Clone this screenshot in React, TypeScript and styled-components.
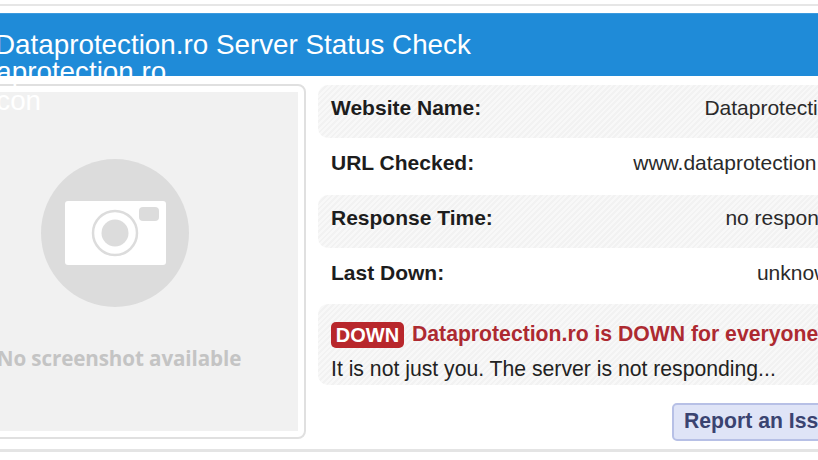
import React from "react";
import styled, { createGlobalStyle } from "styled-components";

const Global = createGlobalStyle`
  html, body { margin: 0; padding: 0; background: #fff; overflow: hidden; width: 818px; height: 460px; }
  body { font-family: "Liberation Sans", Arial, sans-serif; color: #222; }
`;

const Sheet = styled.div`
  width: 1000px;
  height: 448px;
  margin: 4px 0 0 -76px;
  box-sizing: border-box;
  border-top: 2px solid #e6e6e6;
  border-bottom: 3px solid #e4e4e4;
  padding-top: 7px;
  background: #fff;
`;

const Header = styled.header`
  position: relative;
  height: 63px;
  background: #1f8bd8;
  border-top: 1px solid #3c9ade;
  box-sizing: border-box;
  padding: 16px 0 0 71px;
`;

const Title = styled.h1`
  margin: 0;
  font-size: 27.8px;
  line-height: 30px;
  font-weight: 400;
  color: #fff;
`;

const AltText = styled.span`
  position: absolute;
  z-index: 2;
  left: 29px;
  top: 43px;
  width: 250px;
  font-size: 27.8px;
  line-height: 29px;
  color: #fff;
`;

const Body = styled.div`
  display: flex;
  align-items: flex-start;
  gap: 12px;
  padding-top: 8px;
`;

const ScreenshotCard = styled.div`
  flex: none;
  width: 382px;
  height: 355px;
  box-sizing: border-box;
  padding: 6px;
  border: 2px solid #e0e0e0;
  border-radius: 8px;
  background: #fff;
`;

const Placeholder = styled.div`
  height: 100%;
  background: #f1f1f1;
  display: flex;
  flex-direction: column;
  align-items: center;
  padding-top: 67px;
  box-sizing: border-box;
`;

const PlaceholderCaption = styled.div`
  margin: 38px 0 0 8px;
  font-family: "Open Sans", "Noto Sans", sans-serif;
  font-size: 20.6px;
  line-height: 26px;
  font-weight: 700;
  letter-spacing: -0.1px;
  color: #c4c4c4;
  white-space: nowrap;
`;

const Details = styled.div`
  flex: 1;
  display: flex;
  flex-direction: column;
  gap: 2px;
  padding-top: 1px;
  min-width: 0;
`;

const Row = styled.div<{ $striped?: boolean }>`
  height: 53px;
  box-sizing: border-box;
  padding: 0 0 8px 13px;
  width: 523px;
  display: flex;
  align-items: center;
  justify-content: space-between;
  border-radius: 10px;
  background: ${(p) =>
    p.$striped
      ? "repeating-linear-gradient(-45deg, #f2f2f2 0 2px, #f8f8f8 2px 4px)"
      : "transparent"};
`;

const Label = styled.span`
  font-weight: 700;
  font-size: 21px;
  color: #1d1d1d;
`;

const Value = styled.span`
  font-size: 21px;
  color: #2a2a2a;
  white-space: nowrap;
`;

const StatusBox = styled.div`
  margin-top: -1px;
  width: 700px;
  height: 81px;
  box-sizing: border-box;
  padding: 18px 0 0 13px;
  border-radius: 10px;
  background: repeating-linear-gradient(-45deg, #f2f2f2 0 2px, #f8f8f8 2px 4px);
`;

const StatusLine = styled.div`
  display: flex;
  align-items: center;
  gap: 8px;
  height: 26px;
`;

const Badge = styled.span`
  width: 73px;
  height: 26px;
  border-radius: 5px;
  background: #b8272c;
  color: #fff;
  font-weight: 700;
  font-size: 20px;
  line-height: 27px;
  text-align: center;
`;

const StatusHeading = styled.span`
  font-size: 21.2px;
  line-height: 24px;
  padding-bottom: 2px;
  font-weight: 700;
  color: #ad2a31;
  white-space: nowrap;
`;

const StatusText = styled.div`
  margin-top: 8px;
  font-size: 21.2px;
  line-height: 25px;
  color: #222;
`;

const Actions = styled.div`
  display: flex;
  padding: 16px 0 0 354px;
`;

const ReportButton = styled.button`
  height: 38px;
  width: 190px;
  padding: 0 0 2px 10px;
  text-align: left;
  border: 2px solid #b7c0e6;
  border-radius: 5px;
  background: #dfe4f7;
  color: #3a4371;
  font-family: inherit;
  font-size: 21.2px;
  font-weight: 700;
  white-space: nowrap;
`;

const CameraIcon = () => (
  <svg width="148" height="148" viewBox="0 0 148 148" aria-hidden="true">
    <circle cx="74" cy="74" r="74" fill="#dcdcdc" />
    <rect x="24" y="42" width="101" height="64" rx="3" fill="#fff" />
    <rect x="98" y="48" width="20" height="14" rx="4" fill="#dcdcdc" />
    <circle cx="74" cy="74" r="22" fill="none" stroke="#dcdcdc" strokeWidth="2.5" />
    <circle cx="74" cy="74" r="13.5" fill="#dcdcdc" />
  </svg>
);

const rows = [
  { label: "Website Name:", value: "Dataprotection", striped: true },
  { label: "URL Checked:", value: "www.dataprotection.ro", striped: false },
  { label: "Response Time:", value: "no response", striped: true },
  { label: "Last Down:", value: "unknown", striped: false },
];

export default function App() {
  return (
    <>
      <Global />
      <Sheet>
        <Header>
          <Title>Dataprotection.ro Server Status Check</Title>
          <AltText>Dataprotection.ro favicon</AltText>
        </Header>
        <Body>
          <ScreenshotCard>
            <Placeholder>
              <CameraIcon />
              <PlaceholderCaption>No screenshot available</PlaceholderCaption>
            </Placeholder>
          </ScreenshotCard>
          <Details>
            {rows.map((r) => (
              <Row key={r.label} $striped={r.striped}>
                <Label>{r.label}</Label>
                <Value>{r.value}</Value>
              </Row>
            ))}
            <StatusBox>
              <StatusLine>
                <Badge>DOWN</Badge>
                <StatusHeading>Dataprotection.ro is DOWN for everyone</StatusHeading>
              </StatusLine>
              <StatusText>It is not just you. The server is not responding...</StatusText>
            </StatusBox>
            <Actions>
              <ReportButton>Report an Issue</ReportButton>
            </Actions>
          </Details>
        </Body>
      </Sheet>
    </>
  );
}
